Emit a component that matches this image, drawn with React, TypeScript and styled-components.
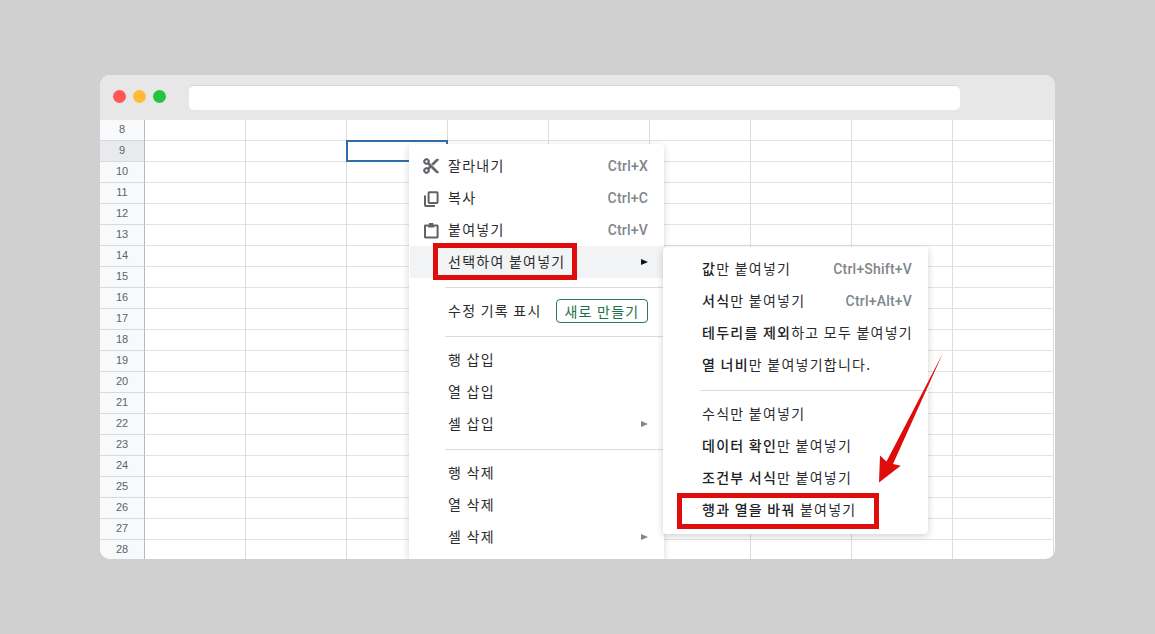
import React from "react";
import styled, { createGlobalStyle } from "styled-components";

const Global = createGlobalStyle`
  html, body { margin: 0; padding: 0; height: 100%; background: #d0d0d0; }
  #root { height: 100%; }
  *, *::before, *::after { box-sizing: border-box; }
`;

const Page = styled.div`
  height: 634px;
  width: 1155px;
  display: flex;
  align-items: center;
  justify-content: center;
  background: #d0d0d0;
  overflow: hidden;
`;

const BrowserWindow = styled.div`
  position: relative;
  width: 955px;
  height: 484px;
  border-radius: 10px;
  overflow: hidden;
  background: #fff;
  display: flex;
  flex-direction: column;
`;

const TitleBar = styled.div`
  flex: none;
  height: 45px;
  background: #e7e7e7;
  display: flex;
  align-items: flex-start;
  padding: 10px 95px 0 13px;
`;

const Dots = styled.div`
  display: flex;
  gap: 7px;
  margin: 5px 23px 0 0;
`;

const Dot = styled.span<{ $color: string }>`
  width: 13px;
  height: 13px;
  border-radius: 50%;
  background: ${(p) => p.$color};
`;

const AddressBar = styled.div`
  flex: 1;
  height: 25px;
  background: #fff;
  border-radius: 5px;
  border-top: 1px solid #d4d4d4;
`;

const Sheet = styled.div`
  flex: none;
  display: flex;
  flex-direction: column;
`;

const Row = styled.div`
  display: flex;
  height: 21px;
  flex: none;
`;

const RowHeader = styled.div<{ $active?: boolean }>`
  flex: none;
  width: 45px;
  height: 21px;
  background: ${(p) => (p.$active ? "#e8eaed" : "#f8f9fa")};
  border-right: 1px solid #b8b8b8;
  border-bottom: 1px solid #d9d9d9;
  color: #5f6368;
  font: 11px/19px "Liberation Sans", Arial, sans-serif;
  text-align: center;
`;

const Cell = styled.div<{ $selected?: boolean }>`
  position: relative;
  flex: none;
  width: 101px;
  height: 21px;
  border-right: 1px solid #dcdcdc;
  border-bottom: 1px solid #e2e2e2;
  ${(p) =>
    p.$selected
      ? `&::after {
           content: "";
           position: absolute;
           left: -1px;
           top: -1px;
           width: 102px;
           height: 22px;
           border: 2px solid #2f6ea8;
           z-index: 1;
         }`
      : ""}
`;

const Menu = styled.div`
  position: absolute;
  z-index: 2;
  left: 309px;
  top: 69px;
  width: 255px;
  padding: 6px 0;
  background: #fff;
  border-radius: 4px 4px 0 0;
  box-shadow: 0 2px 7px rgba(60, 64, 67, 0.22);
`;

const SubMenu = styled.div`
  position: absolute;
  z-index: 3;
  left: 563px;
  top: 172px;
  width: 265px;
  padding: 6px 0 8px;
  background: #fff;
  border-radius: 4px;
  box-shadow: 0 2px 7px rgba(60, 64, 67, 0.24);
`;

const Item = styled.div<{ $active?: boolean; $sub?: boolean }>`
  position: relative;
  height: 32px;
  display: flex;
  align-items: center;
  margin-left: ${(p) => (p.$sub ? "0" : "1px")};
  padding: 0 16px 0 ${(p) => (p.$sub ? "39px" : "12px")};
  background: ${(p) => (p.$active ? "#f1f3f4" : "transparent")};
  color: #2a2b2e;
  font: 400 14px/20px "Noto Sans CJK KR", "Noto Sans", sans-serif;
  letter-spacing: 1.25px;
  white-space: nowrap;
`;

const IconSlot = styled.span`
  flex: none;
  width: 18px;
  height: 18px;
  margin-right: 8px;
  display: block;
  color: #5f6368;
  svg { display: block; }
`;

const Label = styled.span`
  flex: 1;
  padding-bottom: 2px;
`;

const Strong = styled.b`
  font-weight: 500;
  color: #202124;
`;

const Shortcut = styled.span`
  color: #80868b;
  font: 500 14px/20px Roboto, "Liberation Sans", sans-serif;
  letter-spacing: 0.2px;
`;

const Caret = styled.span<{ $dark?: boolean }>`
  width: 0;
  height: 0;
  border-style: solid;
  border-width: 3.5px 0 3.5px 7px;
  border-color: transparent transparent transparent ${(p) => (p.$dark ? "#111" : "#80868b")};
`;

const Separator = styled.div<{ $sub?: boolean }>`
  height: 1px;
  margin: 9px 0 7px ${(p) => (p.$sub ? "37px" : "36px")};
  background: #dadce0;
`;

const NewButton = styled.span`
  height: 24px;
  width: 92px;
  display: flex;
  align-items: center;
  justify-content: center;
  border: 1px solid #2b7a55;
  border-radius: 4px;
  color: #1e6f4a;
  font: 400 14px/20px "Noto Sans CJK KR", "Noto Sans", sans-serif;
  letter-spacing: 1.25px;
`;

const Callout = styled.span<{ $left: number; $top: number; $width: number; $height: number }>`
  position: absolute;
  left: ${(p) => p.$left}px;
  top: ${(p) => p.$top}px;
  width: ${(p) => p.$width}px;
  height: ${(p) => p.$height}px;
  border: 5px solid #e00b0b;
  pointer-events: none;
`;

const ArrowMark = styled.svg`
  position: absolute;
  z-index: 4;
  left: 775px;
  top: 275px;
  width: 75px;
  height: 135px;
`;

const CutIcon = () => (
  <svg width="18" height="18" viewBox="0 0 24 24" fill="currentColor" stroke="currentColor" strokeWidth="1">
    <path d="M9.64 7.64c.23-.5.36-1.05.36-1.64 0-2.21-1.79-4-4-4S2 3.79 2 6s1.79 4 4 4c.59 0 1.14-.13 1.64-.36L10 12l-2.36 2.36C7.14 14.13 6.59 14 6 14c-2.21 0-4 1.79-4 4s1.79 4 4 4 4-1.79 4-4c0-.59-.13-1.14-.36-1.64L12 14l7 7h3v-1L9.64 7.64zM6 8c-1.1 0-2-.89-2-2s.9-2 2-2 2 .89 2 2-.9 2-2 2zm0 12c-1.1 0-2-.89-2-2s.9-2 2-2 2 .89 2 2-.9 2-2 2zM19 3l-6 6 2 2 7-7V3z" />
  </svg>
);

const CopyIcon = () => (
  <svg width="18" height="18" viewBox="0 0 18 18" fill="none" stroke="currentColor" strokeWidth="2">
    <rect x="6.6" y="3.2" width="9" height="10.8" rx="0.8" />
    <path d="M3 6.5V16.2a.8.8 0 0 0 .8.8H13" />
  </svg>
);

const PasteIcon = () => (
  <svg width="18" height="18" viewBox="0 0 18 18" fill="none" stroke="currentColor" strokeWidth="2">
    <rect x="3" y="4.6" width="12.6" height="11.9" rx="0.4" />
    <path d="M6.2 4.4h6V6.6h-6z" fill="currentColor" stroke="none" />
    <path d="M7 2h4.4v2.6H7z" fill="currentColor" stroke="none" />
  </svg>
);

const rowNumbers = Array.from({ length: 21 }, (_, i) => 8 + i);
const columns = Array.from({ length: 9 }, (_, i) => i);

export default function App() {
  return (
    <Page>
      <Global />
      <BrowserWindow>
        <TitleBar>
          <Dots>
            <Dot $color="#ff5757" />
            <Dot $color="#ffbb33" />
            <Dot $color="#24c43f" />
          </Dots>
          <AddressBar />
        </TitleBar>
        <Sheet>
          {rowNumbers.map((n) => (
            <Row key={n}>
              <RowHeader $active={n === 9}>{n}</RowHeader>
              {columns.map((c) => (
                <Cell key={c} $selected={n === 9 && c === 2} />
              ))}
            </Row>
          ))}
        </Sheet>

        <Menu>
          <Item>
            <IconSlot><CutIcon /></IconSlot>
            <Label>잘라내기</Label>
            <Shortcut>Ctrl+X</Shortcut>
          </Item>
          <Item>
            <IconSlot><CopyIcon /></IconSlot>
            <Label>복사</Label>
            <Shortcut>Ctrl+C</Shortcut>
          </Item>
          <Item>
            <IconSlot><PasteIcon /></IconSlot>
            <Label>붙여넣기</Label>
            <Shortcut>Ctrl+V</Shortcut>
          </Item>
          <Item $active>
            <IconSlot />
            <Label>선택하여 붙여넣기</Label>
            <Caret $dark />
            <Callout $left={23} $top={-3} $width={144} $height={37} />
          </Item>
          <Separator />
          <Item>
            <IconSlot />
            <Label>수정 기록 표시</Label>
            <NewButton>새로 만들기</NewButton>
          </Item>
          <Separator />
          <Item><IconSlot /><Label>행 삽입</Label></Item>
          <Item><IconSlot /><Label>열 삽입</Label></Item>
          <Item>
            <IconSlot />
            <Label>셀 삽입</Label>
            <Caret />
          </Item>
          <Separator />
          <Item><IconSlot /><Label>행 삭제</Label></Item>
          <Item><IconSlot /><Label>열 삭제</Label></Item>
          <Item>
            <IconSlot />
            <Label>셀 삭제</Label>
            <Caret />
          </Item>
        </Menu>

        <SubMenu>
          <Item $sub>
            <Label><Strong>값</Strong>만 붙여넣기</Label>
            <Shortcut>Ctrl+Shift+V</Shortcut>
          </Item>
          <Item $sub>
            <Label><Strong>서식</Strong>만 붙여넣기</Label>
            <Shortcut>Ctrl+Alt+V</Shortcut>
          </Item>
          <Item $sub>
            <Label><Strong>테두리를 제외</Strong>하고 모두 붙여넣기</Label>
          </Item>
          <Item $sub>
            <Label><Strong>열 너비</Strong>만 붙여넣기합니다.</Label>
          </Item>
          <Separator $sub />
          <Item $sub>
            <Label>수식만 붙여넣기</Label>
          </Item>
          <Item $sub>
            <Label><Strong>데이터 확인</Strong>만 붙여넣기</Label>
          </Item>
          <Item $sub>
            <Label><Strong>조건부 서식</Strong>만 붙여넣기</Label>
          </Item>
          <Item $sub>
            <Label><Strong>행과 열을 바꿔</Strong> 붙여넣기</Label>
            <Callout $left={14} $top={-1} $width={202} $height={36} />
          </Item>
        </SubMenu>

        <ArrowMark viewBox="0 0 75 135">
          <polygon points="68,3 18,114 25.7,115.7 4,132.5 5,105.5 11.5,111.5" fill="#e00b0b" />
        </ArrowMark>
      </BrowserWindow>
    </Page>
  );
}
